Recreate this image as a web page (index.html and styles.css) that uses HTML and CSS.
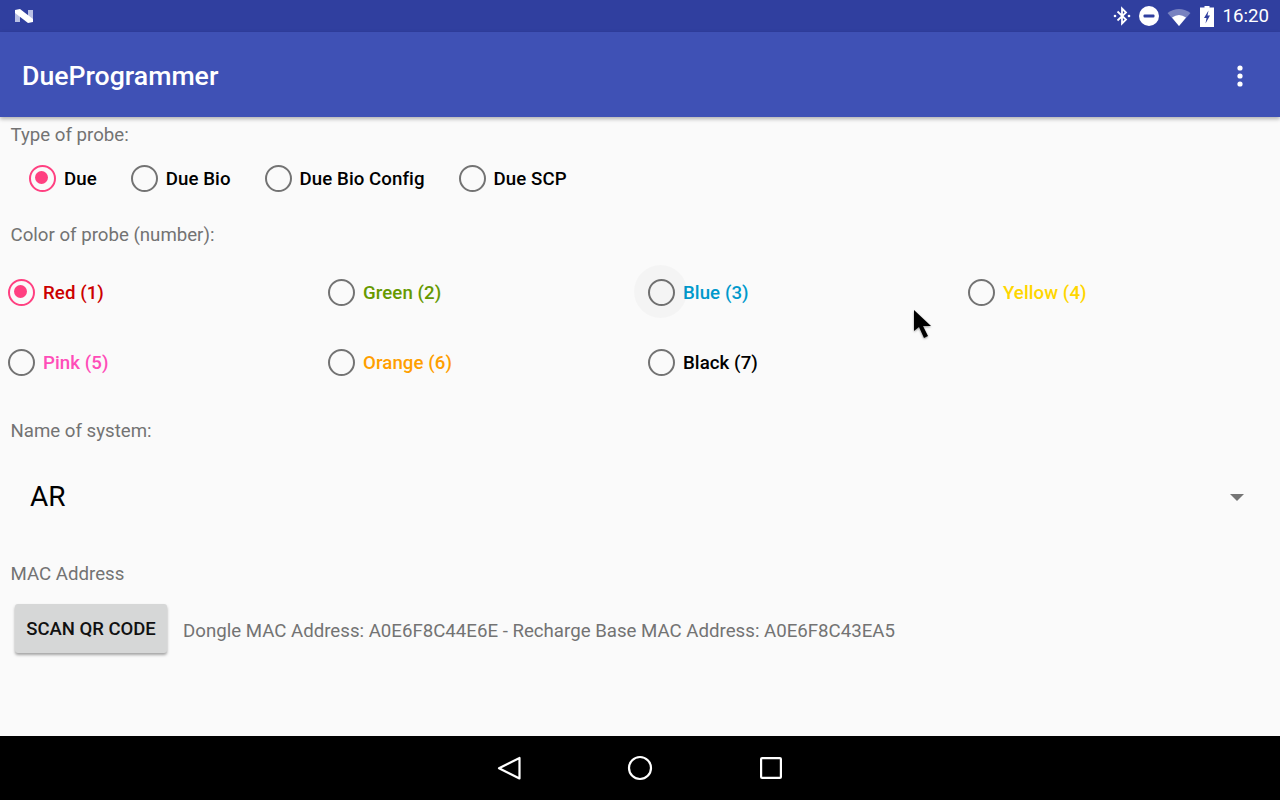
FILE: index.html
```html
<!DOCTYPE html>
<html lang="en">
<head>
<meta charset="utf-8">
<title>DueProgrammer</title>
<link rel="stylesheet" href="styles.css">
</head>
<body>
<div class="screen">
  <header class="status">
    <svg class="n-logo" width="20" height="16" viewBox="0 0 20 16"><path d="M1 2 L6 2 L6 14 L1 14 Z" fill="#b9c0e4"/><path d="M14 2 L19 2 L19 14 L14 14 Z" fill="#b9c0e4"/><path d="M1 2 L6 1 L19 11 L19 14 L14 15 L1 5 Z" fill="#fff"/></svg>
    <div class="status-right">
      <svg class="ic-bt" width="18" height="20" viewBox="0 0 18 20"><path d="M4.500 5.500 L13 13.500 L9 17.500 L9 2.500 L13 6.500 L4.500 14.500" fill="none" stroke="#fff" stroke-width="1.800"/><circle cx="2" cy="10" r="1.300" fill="#fff"/><circle cx="16" cy="10" r="1.300" fill="#fff"/></svg>
      <svg class="ic-dnd" width="20" height="20" viewBox="0 0 20 20"><circle cx="10" cy="10" r="10" fill="#fff"/><rect x="4.500" y="8.500" width="11" height="3" rx="1" fill="#303f9f"/></svg>
      <svg class="ic-wifi" width="24" height="18" viewBox="0 0 24 18"><path d="M0.500 5 Q12 -3 23.500 5 L12 18 Z" fill="#fff" fill-opacity=".35"/><path d="M5 9.500 Q12 4.500 19 9.500 L12 18 Z" fill="#fff"/></svg>
      <svg class="ic-batt" width="14" height="21" viewBox="0 0 14 21"><path d="M4.500 0 H9.500 V1.500 H14 V21 H0 V1.500 H4.500 Z" fill="#fff"/><path d="M8.500 4.500 L4 12 H6.500 L5.500 17.500 L10 9.500 H7.500 Z" fill="#303f9f"/></svg>
      <span class="clock">16:20</span>
    </div>
  </header>
  <div class="appbar">
    <h1 class="app-title">DueProgrammer</h1>
    <svg class="overflow" width="8" height="22" viewBox="0 0 8 22"><circle cx="4" cy="3" r="2.600" fill="#fff"/><circle cx="4" cy="11" r="2.600" fill="#fff"/><circle cx="4" cy="19" r="2.600" fill="#fff"/></svg>
  </div>
  <main class="content">
    <p class="label label-type">Type of probe:</p>
    <div class="types">
      <label class="opt"><span class="radio on"></span><span class="opt-text">Due</span></label>
      <label class="opt"><span class="radio"></span><span class="opt-text">Due Bio</span></label>
      <label class="opt"><span class="radio"></span><span class="opt-text">Due Bio Config</span></label>
      <label class="opt"><span class="radio"></span><span class="opt-text">Due SCP</span></label>
    </div>
    <p class="label label-color">Color of probe (number):</p>
    <div class="colors">
      <label class="opt"><span class="radio on"></span><span class="opt-text c-red">Red (1)</span></label>
      <label class="opt"><span class="radio"></span><span class="opt-text c-green">Green (2)</span></label>
      <label class="opt"><span class="radio ripple"></span><span class="opt-text c-blue">Blue (3)</span></label>
      <label class="opt"><span class="radio"></span><span class="opt-text c-yellow">Yellow (4)</span></label>
      <label class="opt"><span class="radio"></span><span class="opt-text c-pink">Pink (5)</span></label>
      <label class="opt"><span class="radio"></span><span class="opt-text c-orange">Orange (6)</span></label>
      <label class="opt"><span class="radio"></span><span class="opt-text">Black (7)</span></label>
    </div>
    <p class="label label-name">Name of system:</p>
    <div class="spinner">
      <span class="spinner-value">AR</span>
      <span class="spinner-arrow"></span>
    </div>
    <p class="label label-mac">MAC Address</p>
    <div class="mac-row">
      <button class="scan">SCAN QR CODE</button>
      <span class="mac-text">Dongle MAC Address: A0E6F8C44E6E - Recharge Base MAC Address: A0E6F8C43EA5</span>
    </div>
  </main>
  <nav class="navbar">
    <svg width="24" height="24" viewBox="0 0 24 24"><path d="M22.500 2 V22.500 L2 12.200 Z" fill="none" stroke="#fff" stroke-width="2.200" stroke-linejoin="round"/></svg>
    <svg width="26" height="26" viewBox="0 0 26 26"><circle cx="13" cy="13" r="11" fill="none" stroke="#fff" stroke-width="2.200"/></svg>
    <svg width="24" height="24" viewBox="0 0 24 24"><rect x="2.100" y="2.100" width="19.800" height="19.800" rx="1" fill="none" stroke="#fff" stroke-width="2.200"/></svg>
  </nav>
  <svg class="cursor" width="22" height="32" viewBox="0 0 22 32"><path d="M2 1 L2 22 L7 18 L12 29 L16 27 L11 17 L19 17 Z" fill="#000"/></svg>
</div>
</body>
</html>
```
FILE: styles.css
```css
* { box-sizing: border-box; }
html, body { margin: 0; padding: 0; }
body { font-family: Roboto, "Liberation Sans", sans-serif; }
.screen { position: relative; width: 1280px; height: 800px; overflow: hidden; display: flex; flex-direction: column; background: #fafafa; }

.status { height: 32px; background: #303f9f; display: flex; align-items: center; justify-content: space-between; padding: 0 11px 0 14px; flex: none; }
.n-logo { display: block; }
.status-right { display: flex; align-items: center; }
.ic-bt { margin-right: 8px; }
.ic-dnd { margin-right: 8px; }
.ic-wifi { margin-right: 9px; margin-top: 1px; }
.ic-batt { margin-right: 9px; }
.clock { color: #fff; font-size: 18.67px; font-weight: 400; line-height: 32px; }

.appbar { height: 85px; flex: none; background: #3f51b5; display: flex; align-items: center; justify-content: space-between; padding: 3px 36px 0 22px; box-shadow: 0 2px 4px rgba(0,0,0,.3); position: relative; z-index: 1; }
.app-title { margin: 0; color: #fff; font-size: 26.67px; font-weight: 500; line-height: 32px; }
.overflow { display: block; }

.content { flex: 1; min-height: 0; display: flex; flex-direction: column; }
.label { margin: 0; color: #737373; font-size: 18.67px; line-height: 24px; padding-left: 10.5px; }
.label-type { margin-top: 6px; }
.types { display: flex; gap: 34px; padding-left: 29px; margin-top: 11px; height: 40px; align-items: center; }
.opt { display: flex; align-items: center; gap: 8px; color: #000; font-size: 18.67px; font-weight: 500; line-height: 24px; letter-spacing: .07px; }
.opt-text { padding-top: 2px; }
.radio { width: 27px; height: 27px; border-radius: 50%; border: 2.700px solid #737373; flex: none; position: relative; display: block; }
.radio.on { border-color: #ff4081; }
.radio.on::after { content: ""; position: absolute; left: 4.300px; top: 4.300px; width: 13px; height: 13px; border-radius: 50%; background: #ff4081; }
.radio.ripple::before { content: ""; position: absolute; left: -15.700px; top: -15.700px; width: 53px; height: 53px; border-radius: 50%; background: rgba(0,0,0,.025); }
.label-color { margin-top: 25px; }
.colors { display: grid; grid-template-columns: repeat(4, 320px); grid-auto-rows: 70px; align-items: center; padding-left: 8px; margin-top: 10px; }
.c-red { color: #cc0000; }
.c-green { color: #669900; }
.c-blue { color: #0099cc; }
.c-yellow { color: #ffd600; }
.c-pink { color: #ff4db8; }
.c-orange { color: #ff9f00; }
.label-name { margin-top: 22px; }
.spinner { display: flex; align-items: center; justify-content: space-between; height: 72px; padding: 0 36px 0 30px; margin-top: 18px; }
.spinner-value { font-size: 28px; color: #000; line-height: 36px; }
.spinner-arrow { width: 0; height: 0; border-left: 7px solid transparent; border-right: 7px solid transparent; border-top: 7px solid #757575; }
.label-mac { margin-top: 29px; }
.mac-row { display: flex; align-items: center; gap: 16px; margin-top: 18px; padding-left: 15px; }
.scan { width: 152px; height: 49px; border: 0; border-radius: 3px; background: #d6d7d7; color: #111; font: 500 18.5px/24px Roboto, "Liberation Sans", sans-serif; padding: 0; box-shadow: 0 2px 3px rgba(0,0,0,.35); }
.mac-text { color: #737373; font-size: 18.67px; line-height: 24px; padding-top: 4px; }

.navbar { height: 64px; flex: none; background: #000; display: flex; align-items: center; justify-content: center; gap: 106px; }
.navbar svg { display: block; }
.cursor { position: absolute; left: 912px; top: 309px; filter: drop-shadow(0 1px 1px rgba(0,0,0,.4)); }
```
